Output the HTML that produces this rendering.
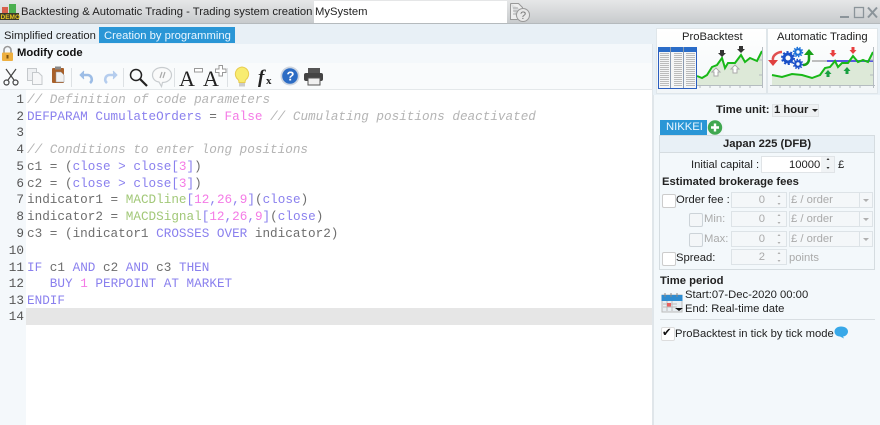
<!DOCTYPE html>
<html><head><meta charset="utf-8">
<style>
html,body{margin:0;padding:0}
body{width:880px;height:425px;overflow:hidden;background:#fff;position:relative;font-family:"Liberation Sans",sans-serif;font-size:11.25px;color:#222}
.a{position:absolute}
.t{position:absolute;white-space:nowrap;line-height:14px;font-size:11.25px}
.ln{position:absolute;width:24px;text-align:right;left:0;font:12.67px/16px "Liberation Mono",monospace;color:#555}
.c{position:absolute;left:27px;white-space:pre;font:12.67px/16px "Liberation Mono",monospace;color:#6e6e6e}
.k{color:#8a80ee}.s{color:#f47ae6}.g{color:#b4b4b4;font-style:italic}.m{color:#a2c878}
.sp{position:absolute;height:16px;background:#f4f7f9;border:1px solid #dde3e7;box-sizing:border-box;color:#aaa;text-align:right;line-height:14px;font-size:11.25px}
.cb{position:absolute;width:12px;height:12px;border:1px solid #ccc;background:#fff;border-radius:2px}
.cb.d{background:#f3f6f8;border-color:#ccd3d8}
.dim{color:#aaa}
svg{position:absolute;overflow:visible}
</style></head><body>

<!-- title bar -->
<div class="a" style="left:0;top:0;width:880px;height:24px;background:linear-gradient(#e6e7e8,#c8cbcd);border-bottom:1px solid #b5babd;box-sizing:border-box"></div>
<div class="a" style="left:314px;top:1px;width:193px;height:22px;background:#fff"></div>
<svg style="left:0;top:0" width="20" height="22">
<rect x="2" y="7" width="6" height="6" fill="#d8604c"/><rect x="9" y="4" width="7" height="9" fill="#4cb050"/>
<rect x="0" y="13" width="19" height="7" fill="#3b3a2a"/>
<text x="0.5" y="19" font-family="Liberation Sans" font-size="6.500" font-weight="bold" fill="#e8c820">DEMO</text>
</svg>
<div class="t" style="left:21px;top:5px">Backtesting &amp; Automatic Trading - Trading system creation</div>
<div class="t" style="left:315px;top:5px">MySystem</div>
<svg style="left:0;top:0" width="880" height="25" fill="none" stroke="#999" stroke-width="1">
<path d="M510.500 3.500h8l4 4v3" fill="#eee"/><path d="M510.500 3.500v16h7" fill="#eee"/><path d="M513 8h5M513 11h5M513 14h4" stroke="#aaa"/>
<circle cx="523" cy="15" r="6.500" fill="#e8e8e8"/>
<text x="520" y="19" font-family="Liberation Sans" font-size="11" fill="#777" stroke="none">?</text>
<path d="M840 17h9" stroke="#8b949a" stroke-width="2"/><rect x="854.500" y="7.500" width="9" height="10" stroke="#8b949a" stroke-width="1.300"/><path d="M868 7.500l9 10M877 7.500l-9 10" stroke="#8b949a" stroke-width="2"/>
</svg>

<!-- tabs row -->
<div class="a" style="left:0;top:24px;width:880px;height:401px;background:#e8f0f6"></div>
<div class="t" style="left:4px;top:29px">Simplified creation</div>
<div class="a" style="left:99px;top:27px;width:136px;height:16px;background:#2a96d6"></div>
<div class="t" style="left:104px;top:29px;color:#eaf6ff">Creation by programming</div>

<!-- main panel -->
<div class="a" style="left:0;top:44px;width:652px;height:381px;background:#fff;border-right:1px solid #e0e6ea"></div>
<div class="a" style="left:0;top:44px;width:652px;height:19px;background:#f4f8fb"></div>
<div class="a" style="left:0;top:63px;width:652px;height:26px;background:#f9fbfc;border-bottom:1px solid #e4e8ea"></div>
<svg style="left:1px;top:45px" width="13" height="17">
<path d="M3 8V5a3.500 3.500 0 017 0v3" fill="none" stroke="#999" stroke-width="1.600"/>
<rect x="1" y="7.500" width="11" height="8.500" rx="1" fill="#eeb040"/><rect x="5.500" y="10" width="2" height="3.500" fill="#7a5010"/>
</svg>
<div class="t" style="left:17px;top:46px;font-weight:bold;color:#111">Modify code</div>

<!-- toolbar icons -->
<svg style="left:3px;top:68px" width="16" height="18" fill="none" stroke="#444" stroke-width="1.200">
<path d="M3 1l8 11M13 1L5 12"/><circle cx="3.500" cy="14.500" r="2.500"/><circle cx="12.500" cy="14.500" r="2.500"/>
</svg>
<svg style="left:26px;top:67px" width="18" height="19" stroke="#c5c9cc" fill="#eef0f2">
<rect x="1.500" y="1.500" width="9" height="12"/><path d="M6.500 5.500h6l3.500 3.500v8.500h-9.500z" fill="#f6f7f8"/>
</svg>
<svg style="left:51px;top:66px" width="15" height="19">
<rect x="1" y="2" width="12" height="15" rx="1" fill="#a8602a"/><rect x="4" y="0.500" width="6" height="3" fill="#888"/>
<path d="M5 6h5l3 3v7H5z" fill="#f1f1f1" stroke="#999" stroke-width=".5"/>
</svg>
<div class="a" style="left:71px;top:68px;width:1px;height:19px;background:#dde1e4"></div>
<svg style="left:79px;top:70px" width="16" height="14" fill="none">
<path d="M5 1L1 5l4 4" fill="#9dbde6" stroke="#9dbde6" stroke-width="1"/><path d="M3 5h6a4.500 4.500 0 012 8" stroke="#9dbde6" stroke-width="2.600"/>
</svg>
<svg style="left:102px;top:70px" width="16" height="14" fill="none">
<path d="M11 1l4 4-4 4" fill="#b5cdee" stroke="#b5cdee" stroke-width="1"/><path d="M13 5H7a4.500 4.500 0 00-2 8" stroke="#b5cdee" stroke-width="2.600"/>
</svg>
<div class="a" style="left:123px;top:68px;width:1px;height:19px;background:#dde1e4"></div>
<svg style="left:129px;top:68px" width="20" height="19" fill="none" stroke="#222">
<circle cx="7" cy="7" r="5.500" stroke-width="1.500"/><path d="M11 11l7 7" stroke-width="2.200"/>
</svg>
<svg style="left:151px;top:66px" width="22" height="22" fill="#fafafa" stroke="#c8cccf" stroke-width="1.200">
<path d="M11 1.500c5.500 0 9.500 3.300 9.500 7.500s-4 7.500-9 7.500l-1 4-2.500-4.500C4 15.500 1.500 12.500 1.500 9c0-4.200 4-7.500 9.500-7.500z"/>
<path d="M9 12l2-6M12 12l2-6" stroke="#aaa" fill="none"/>
</svg>
<div class="a" style="left:174px;top:68px;width:1px;height:19px;background:#dde1e4"></div>
<div class="t" style="left:179px;top:69px;font:22px/19px 'Liberation Serif',serif;color:#222">A</div>
<svg style="left:194px;top:68px" width="10" height="6"><rect x="0.500" y="0.500" width="8" height="3.500" fill="#fff" stroke="#999"/></svg>
<div class="t" style="left:203px;top:69px;font:22px/19px 'Liberation Serif',serif;color:#222">A</div>
<svg style="left:215px;top:65px" width="12" height="12"><path d="M4 .5h3.500v3.500H11v3.500H7.500V11H4V7.500H.5V4H4z" fill="#fff" stroke="#999"/></svg>
<div class="a" style="left:227px;top:68px;width:1px;height:19px;background:#dde1e4"></div>
<svg style="left:234px;top:66px" width="16" height="22">
<path d="M8 1a7 7 0 00-4 12.500c.8.8 1 2 1 3h6c0-1 .2-2.200 1-3A7 7 0 008 1z" fill="#f8ec70" stroke="#e8cc50"/>
<rect x="5" y="17" width="6" height="3.500" fill="#ccc"/>
</svg>
<div class="t" style="left:258px;top:68px;font:italic bold 19px/20px 'Liberation Serif',serif;color:#222">f</div>
<div class="t" style="left:266px;top:75px;font:bold 11px/12px 'Liberation Serif',serif;color:#222">x</div>
<svg style="left:280px;top:66px" width="20" height="20">
<circle cx="10" cy="10" r="9.500" fill="#cdd5e0"/><circle cx="10" cy="10" r="7.800" fill="#2c6cc4"/>
<text x="6.500" y="14.500" font-family="Liberation Sans" font-weight="bold" font-size="13" fill="#fff">?</text>
</svg>
<svg style="left:304px;top:68px" width="20" height="17">
<rect x="4" y="0" width="12" height="5" fill="#555"/><rect x="0" y="5" width="19" height="8" rx="2" fill="#444"/><rect x="4" y="10" width="12" height="7" fill="#f0f0f0" stroke="#555"/>
</svg>

<!-- editor -->
<div class="a" style="left:0;top:90px;width:26px;height:335px;background:#f4f8fb"></div>
<div class="a" style="left:26px;top:308px;width:626px;height:17px;background:#e6e6e6"></div>

<div class="ln" style="top:92px">1</div><div class="c g" style="top:92px">// Definition of code parameters</div>
<div class="ln" style="top:109px">2</div><div class="c" style="top:109px"><span class="k">DEFPARAM CumulateOrders</span> = <span class="s">False</span> <span class="g">// Cumulating positions deactivated</span></div>
<div class="ln" style="top:125px">3</div>
<div class="ln" style="top:142px">4</div><div class="c g" style="top:142px">// Conditions to enter long positions</div>
<div class="ln" style="top:159px">5</div><div class="c" style="top:159px">c1 = (<span class="k">close &gt; close[</span><span class="s">3</span><span class="k">]</span>)</div>
<div class="ln" style="top:176px">6</div><div class="c" style="top:176px">c2 = (<span class="k">close &gt; close[</span><span class="s">3</span><span class="k">]</span>)</div>
<div class="ln" style="top:192px">7</div><div class="c" style="top:192px">indicator1 = <span class="m">MACDline</span><span class="k">[</span><span class="s">12</span><span class="k">,</span><span class="s">26</span><span class="k">,</span><span class="s">9</span><span class="k">]</span>(<span class="k">close</span>)</div>
<div class="ln" style="top:209px">8</div><div class="c" style="top:209px">indicator2 = <span class="m">MACDSignal</span><span class="k">[</span><span class="s">12</span><span class="k">,</span><span class="s">26</span><span class="k">,</span><span class="s">9</span><span class="k">]</span>(<span class="k">close</span>)</div>
<div class="ln" style="top:226px">9</div><div class="c" style="top:226px">c3 = (indicator1 <span class="k">CROSSES OVER</span> indicator2)</div>
<div class="ln" style="top:243px">10</div>
<div class="ln" style="top:260px">11</div><div class="c" style="top:260px"><span class="k">IF</span> c1 <span class="k">AND</span> c2 <span class="k">AND</span> c3 <span class="k">THEN</span></div>
<div class="ln" style="top:276px">12</div><div class="c" style="top:276px">   <span class="k">BUY</span> <span class="s">1</span> <span class="k">PERPOINT AT MARKET</span></div>
<div class="ln" style="top:293px">13</div><div class="c" style="top:293px"><span class="k">ENDIF</span></div>
<div class="ln" style="top:309px">14</div>

<!-- right panel -->
<div class="a" style="left:653px;top:95px;width:227px;height:330px;background:#f3f8fb;border-left:1px solid #e0e6ea;box-sizing:border-box"></div>
<div class="a" style="left:656px;top:28px;width:111px;height:66px;background:linear-gradient(#fff,#f2f6f8);border:1px solid #dfe6ea;box-sizing:border-box"></div>
<div class="a" style="left:767px;top:28px;width:111px;height:66px;background:linear-gradient(#fff,#f2f6f8);border:1px solid #dfe6ea;box-sizing:border-box"></div>
<div class="t" style="left:682px;top:30px">ProBacktest</div>
<div class="t" style="left:777px;top:30px">Automatic Trading</div>

<!-- charts, page coordinates -->
<svg style="left:0;top:0" width="880" height="95" fill="none">
<path d="M697 76L702 78L707 75L712 67L717 65L722 58L725 68L728 63L735 63L741 55L745 62L750 58L757 61L762 51V85H697z" fill="#dde9d8"/>
<path d="M697 76L702 78L707 75L712 67L717 65L722 58L725 68L728 63L735 63L741 55L745 62L750 58L757 61L762 51" stroke="#18b818" stroke-width="2"/>
<path d="M697 85.500H763M762.500 47V88M700 85v3M710 85v3M720 85v3M730 85v3M740 85v3M750 85v3M759 60h3M759 75h3" stroke="#b5bcc0"/>
<path d="M720 50h4v3h2l-4 4-4-4h2zM739 46h4v3h2l-4 4-4-4h2z" fill="#333"/>
<path d="M716 68l4 4h-2v4h-4v-4h-2zM735 65l4 4h-2v4h-4v-4h-2z" fill="#fff" stroke="#aaa"/>

<path d="M772 75L782 77L792 74L802 75L812 78L820 75L825 68L830 67L835 61L838 67L842 63L848 63L853 56L858 62L863 60L868 62L873 52V85H772z" fill="#dde9d8"/>
<path d="M812 61h15" stroke="#aaa" stroke-width="1.500"/><path d="M827 61h46" stroke="#5858e0" stroke-width="2"/>
<path d="M772 75L782 77L792 74L802 75L812 78L820 75L825 68L830 67L835 61L838 67L842 63L848 63L853 56L858 62L863 60L868 62L873 52" stroke="#18b818" stroke-width="2"/>
<path d="M770 85.500H875M873.500 47V88M780 85v3M790 85v3M800 85v3M810 85v3M820 85v3M830 85v3M840 85v3M850 85v3M860 85v3M870 60h3M870 75h3" stroke="#b5bcc0"/>
<circle cx="788" cy="58" r="4" stroke="#1a50c8" stroke-width="3"/>
<circle cx="788" cy="58" r="6" stroke="#1a50c8" stroke-width="2" stroke-dasharray="2 1.800"/>
<circle cx="798" cy="52" r="2.800" stroke="#1a70d8" stroke-width="2.200"/>
<circle cx="798" cy="52" r="4.500" stroke="#1a70d8" stroke-width="1.500" stroke-dasharray="1.500 1.300"/>
<circle cx="798" cy="64" r="2.800" stroke="#1a50c8" stroke-width="2.200"/>
<circle cx="798" cy="64" r="4.500" stroke="#1a50c8" stroke-width="1.500" stroke-dasharray="1.500 1.300"/>
<path d="M768 60h10l-5 6z" fill="#e04040"/><path d="M773 60c-1-4 4-8 9-8" stroke="#e05050" stroke-width="2.500"/>
<path d="M809 49l5 6h-10z" fill="#18a018"/><path d="M809 54v5c0 3-2 6-6 6" stroke="#18a018" stroke-width="2.500"/>
<path d="M831.500 50h3v3h2l-3.500 4-3.500-4h2zM851.500 47h3v3h2l-3.500 4-3.500-4h2z" fill="#e84040"/>
<path d="M828 70l3.500 4h-2v3h-3v-3h-2zM847 67l3.500 4h-2v3h-3v-3h-2z" fill="#18a040"/>
</svg>
<div class="a" style="left:658px;top:47px;width:39px;height:42px;border:1px solid #2a5ec0;border-top:5px solid #2a6cc8;box-sizing:border-box;background:#f4f5f6"></div>
<div class="a" style="left:660px;top:53px;width:9px;height:34px;background:repeating-linear-gradient(#bbb 0 1px,#f4f5f6 1px 2px)"></div>
<div class="a" style="left:674px;top:53px;width:8px;height:34px;background:repeating-linear-gradient(#bbb 0 1px,#f4f5f6 1px 2px)"></div>
<div class="a" style="left:686px;top:53px;width:9px;height:34px;background:repeating-linear-gradient(#bbb 0 1px,#f4f5f6 1px 2px)"></div>
<div class="a" style="left:670px;top:47px;width:1px;height:41px;background:#8a9ab0"></div>
<div class="a" style="left:683px;top:47px;width:1px;height:41px;background:#8a9ab0"></div>

<div class="t" style="left:716px;top:103px;font-weight:bold">Time unit:</div>
<div class="a" style="left:772px;top:104px;width:47px;height:13px;background:#eef1f3;border:1px solid #e0e4e6;box-sizing:border-box"></div>
<div class="t" style="left:774px;top:103px;font-weight:bold">1 hour</div>
<div class="a" style="left:812px;top:109px;border:3px solid transparent;border-top:3px solid #222"></div>

<div class="a" style="left:660px;top:120px;width:47px;height:15px;background:#2a96d6"></div>
<div class="t" style="left:666px;top:120px;color:#eaf6ff">NIKKEI</div>
<svg style="left:707px;top:119px" width="17" height="16"><rect x="0" y="1" width="17" height="15" fill="#f0f5f8"/><circle cx="8" cy="8.500" r="7.200" fill="#40a850"/><path d="M8 4.500v8M4 8.500h8" stroke="#fff" stroke-width="2.400"/></svg>

<div class="a" style="left:659px;top:135px;width:216px;height:135px;border:1px solid #d5dce0;box-sizing:border-box"></div>
<div class="a" style="left:660px;top:136px;width:214px;height:16px;background:#e8f0f6;border-bottom:1px solid #d5dce0"></div>
<div class="t" style="left:723px;top:137px;font-weight:bold">Japan 225 (DFB)</div>

<div class="t" style="left:691px;top:158px">Initial capital :</div>
<div class="a" style="left:761px;top:156px;width:74px;height:17px;background:#fff;border:1px solid #e0e4e7;box-sizing:border-box"></div>
<div class="t" style="left:789px;top:158px">10000</div>
<div class="a" style="left:821px;top:157px;width:13px;height:15px;background:#f0f3f5"></div>
<div class="t" style="left:838px;top:158px">£</div>

<div class="t" style="left:662px;top:175px;font-weight:bold">Estimated brokerage fees</div>

<div class="cb" style="left:662px;top:194px"></div>
<div class="t" style="left:676px;top:193px">Order fee :</div>
<div class="sp" style="left:731px;top:192px;width:56px;padding-right:21px">0</div>
<div class="sp dim" style="left:789px;top:192px;width:84px;text-align:left;padding-left:1px">£ / order</div>
<div class="a" style="left:859px;top:192px;width:1px;height:16px;background:#dde3e7"></div>

<div class="cb d" style="left:689px;top:213px"></div>
<div class="t dim" style="left:704px;top:212px">Min:</div>
<div class="sp" style="left:731px;top:211px;width:56px;padding-right:21px">0</div>
<div class="sp dim" style="left:789px;top:211px;width:84px;text-align:left;padding-left:1px">£ / order</div>
<div class="a" style="left:859px;top:211px;width:1px;height:16px;background:#dde3e7"></div>

<div class="cb d" style="left:689px;top:233px"></div>
<div class="t dim" style="left:704px;top:232px">Max:</div>
<div class="sp" style="left:731px;top:231px;width:56px;padding-right:21px">0</div>
<div class="sp dim" style="left:789px;top:231px;width:84px;text-align:left;padding-left:1px">£ / order</div>
<div class="a" style="left:859px;top:231px;width:1px;height:16px;background:#dde3e7"></div>

<div class="cb" style="left:662px;top:252px"></div>
<div class="t" style="left:676px;top:251px">Spread:</div>
<div class="sp" style="left:731px;top:249px;width:56px;padding-right:21px">2</div>
<div class="t dim" style="left:789px;top:251px">points</div>

<!-- spinner and dropdown arrows -->
<svg style="left:0;top:0" width="880" height="270">
<path d="M826.500 160l1.500-2 1.500 2zM826.500 167l1.500 2 1.500-2z" fill="#333"/>
<g fill="#b0b0b0">
<path d="M777.500 197l1.500-2 1.500 2zM777.500 203l1.500 2 1.500-2zM777.500 216l1.500-2 1.500 2zM777.500 222l1.500 2 1.500-2zM777.500 236l1.500-2 1.500 2zM777.500 242l1.500 2 1.500-2zM777.500 254l1.500-2 1.500 2zM777.500 260l1.500 2 1.500-2z"/>
<path d="M863 199h6l-3 3zM863 218h6l-3 3zM863 238h6l-3 3z"/>
</g>
</svg>

<div class="t" style="left:660px;top:274px;font-weight:bold">Time period</div>
<svg style="left:661px;top:292px" width="23" height="21">
<rect x="1" y="3" width="20" height="17" fill="#e8eef2" stroke="#bbb"/><rect x="0.500" y="3" width="21" height="6" fill="#2f8cd0"/>
<path d="M4 1v4M10 1v4M16 1v4" stroke="#888"/><path d="M2 12h14M2 15h14M6 9v10M11 9v10" stroke="#bbb"/>
<rect x="6" y="11" width="4" height="3.500" fill="#e86060"/><path d="M14 16h8l-4 3z" fill="#111"/>
</svg>
<div class="t" style="left:685px;top:288px">Start:07-Dec-2020 00:00</div>
<div class="t" style="left:685px;top:302px">End: Real-time date</div>
<div class="a" style="left:660px;top:319px;width:215px;height:1px;background:#d8dee2"></div>

<div class="cb" style="left:661px;top:327px;border-color:#ddd"></div>
<div class="t" style="left:662px;top:326px;font-size:11.500px;color:#111">&#10004;</div>
<div class="t" style="left:675px;top:327px">ProBacktest in tick by tick mode</div>
<svg style="left:834px;top:326px" width="15" height="13"><path d="M7 0.500c4 0 7 2 7 5s-3 5-5 5l1 2-4-2c-3 0-5.500-2-5.500-5s3-5 6.500-5z" fill="#38a8e8"/></svg>

</body></html>
